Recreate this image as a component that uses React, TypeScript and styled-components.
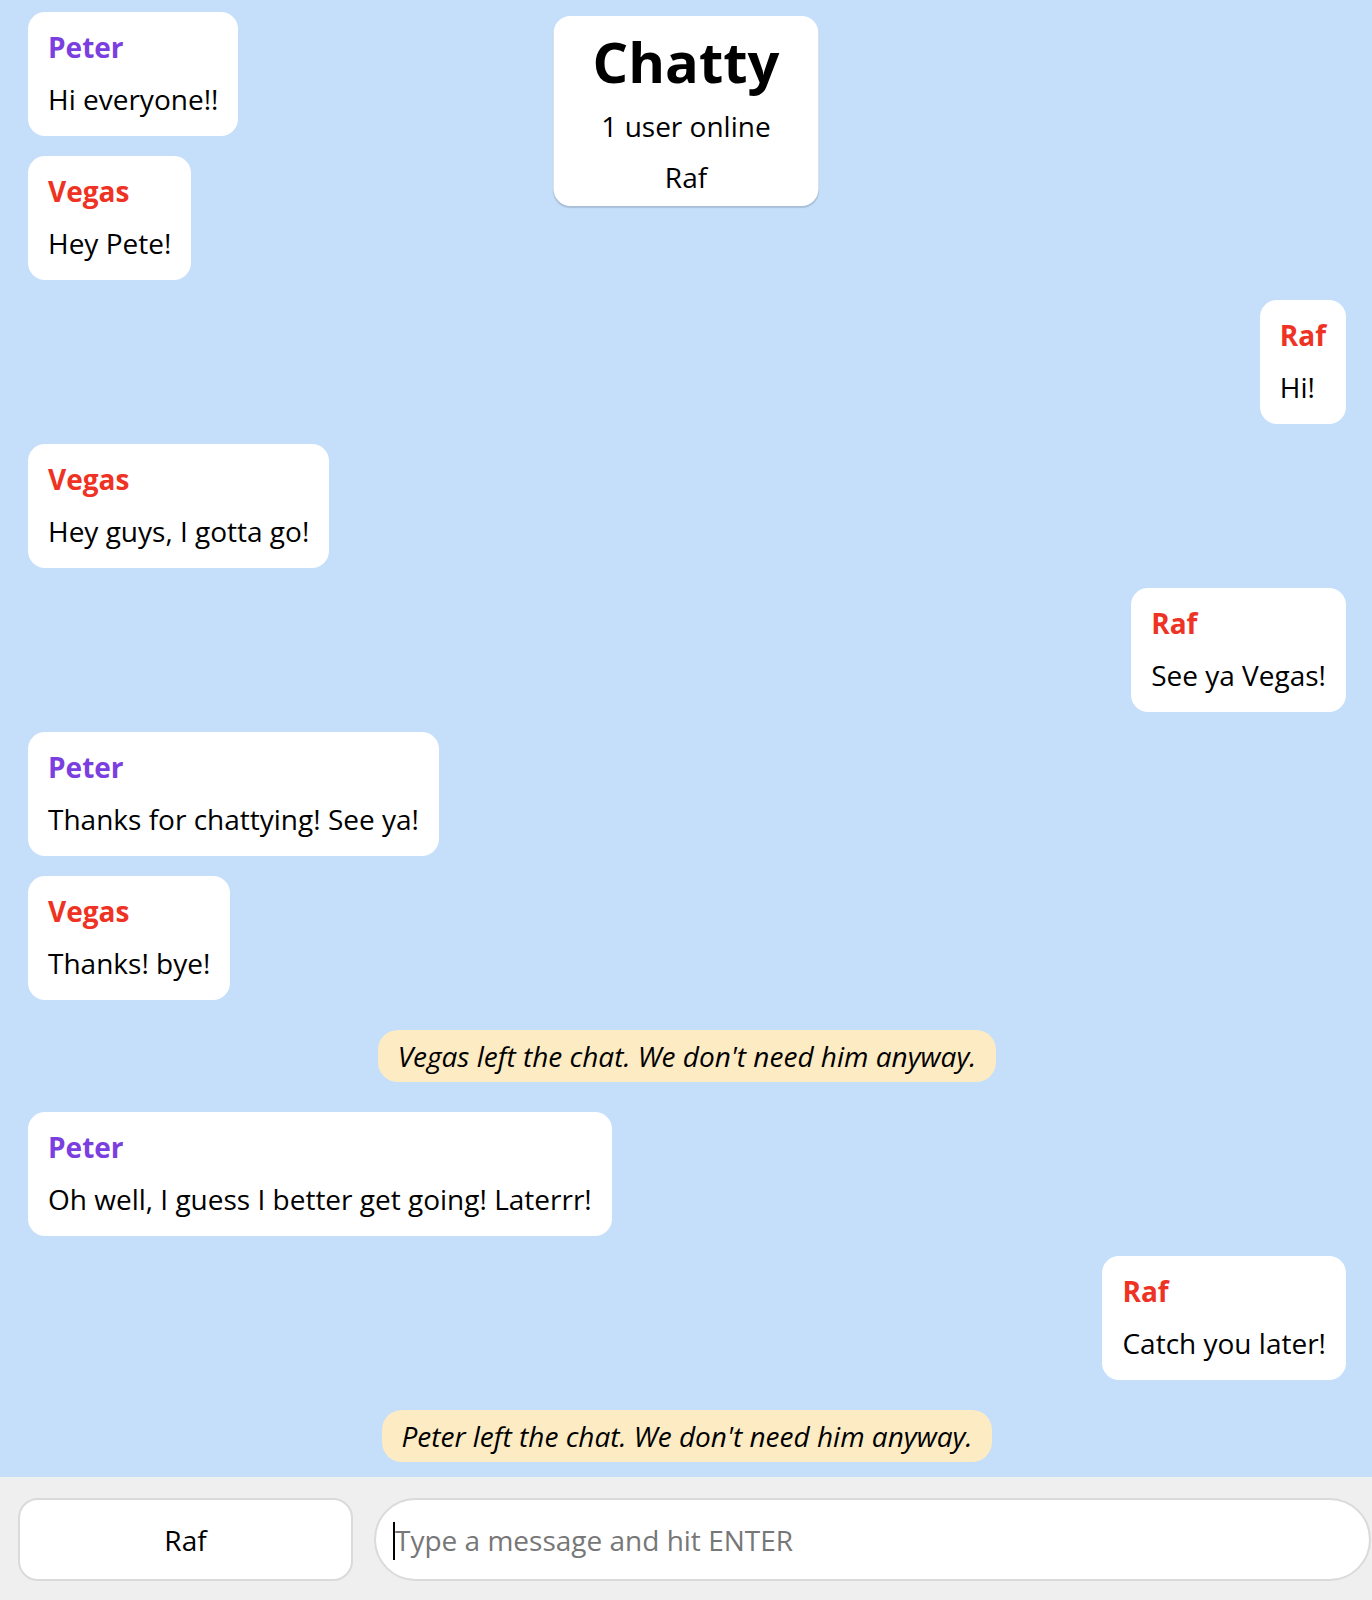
import React from "react";
import styled, { createGlobalStyle } from "styled-components";

const GlobalStyle = createGlobalStyle`
  html, body { margin: 0; padding: 0; }
  body {
    font-family: "Open Sans", "Noto Sans", sans-serif;
    background: #c5dffb;
  }
  * { box-sizing: border-box; }
`;

const Page = styled.div`
  position: relative;
  height: 1600px;
  display: flex;
  flex-direction: column;
  overflow: hidden;
`;

const Header = styled.header`
  position: absolute;
  top: 16px;
  left: 50%;
  transform: translateX(-50%);
  width: 265px;
  padding: 12px 0 3px;
  background: #fff;
  border-radius: 17px;
  box-shadow: 0 2px 1px rgba(0, 0, 0, 0.14);
  text-align: center;
  display: flex;
  flex-direction: column;
  align-items: center;
  z-index: 2;
`;

const Title = styled.h1`
  margin: 0 0 7px;
  font-size: 56px;
  line-height: 66px;
  font-weight: 700;
  color: #000;
`;

const HeaderLine = styled.div`
  font-size: 28px;
  line-height: 51px;
  color: #000;
`;

const MessageList = styled.main`
  flex: 1;
  display: flex;
  flex-direction: column;
  gap: 20px;
  padding: 12px 26px 0 28px;
`;

const Bubble = styled.div<{ $own: boolean }>`
  align-self: ${(p) => (p.$own ? "flex-end" : "flex-start")};
  background: #fff;
  border-radius: 17px;
  padding: 15px 20px 17px;
  display: flex;
  flex-direction: column;
  gap: 12px;
`;

const Username = styled.div<{ $color: string }>`
  font-size: 28px;
  line-height: 40px;
  font-weight: 700;
  color: ${(p) => p.$color};
`;

const Content = styled.div`
  font-size: 28px;
  line-height: 40px;
  color: #000;
`;

const Notice = styled.div`
  align-self: center;
  margin: 10px 0;
  background: #fdebc3;
  border-radius: 20px;
  padding: 6px 20px;
  font-size: 28px;
  line-height: 40px;
  font-style: italic;
  color: #000;
`;

const Footer = styled.footer`
  height: 123px;
  background: #efefef;
  display: flex;
  align-items: flex-start;
  gap: 21px;
  padding: 21px 1px 0 18px;
`;

const NameField = styled.div`
  width: 335px;
  height: 83px;
  background: #fff;
  border: 2px solid #dadada;
  border-radius: 20px;
  display: flex;
  align-items: center;
  justify-content: center;
  font-size: 28px;
  color: #000;
`;

const MessageField = styled.div`
  position: relative;
  flex: 1;
  height: 83px;
  background: #fff;
  border: 2px solid #dadada;
  border-radius: 42px;
  display: flex;
  align-items: center;
  padding-left: 19px;
  font-size: 28px;
  color: #777;
`;

const Caret = styled.span`
  position: absolute;
  left: 17px;
  top: 22px;
  width: 2px;
  height: 38px;
  background: #000;
`;

type Msg =
  | { kind: "msg"; user: string; text: string }
  | { kind: "notice"; text: string };

const COLORS: Record<string, string> = {
  Peter: "#7b3fe0",
  Vegas: "#ee3324",
  Raf: "#ee3324",
};

const messages: Msg[] = [
  { kind: "msg", user: "Peter", text: "Hi everyone!!" },
  { kind: "msg", user: "Vegas", text: "Hey Pete!" },
  { kind: "msg", user: "Raf", text: "Hi!" },
  { kind: "msg", user: "Vegas", text: "Hey guys, I gotta go!" },
  { kind: "msg", user: "Raf", text: "See ya Vegas!" },
  { kind: "msg", user: "Peter", text: "Thanks for chattying! See ya!" },
  { kind: "msg", user: "Vegas", text: "Thanks! bye!" },
  { kind: "notice", text: "Vegas left the chat. We don't need him anyway." },
  { kind: "msg", user: "Peter", text: "Oh well, I guess I better get going! Laterrr!" },
  { kind: "msg", user: "Raf", text: "Catch you later!" },
  { kind: "notice", text: "Peter left the chat. We don't need him anyway." },
];

export default function App() {
  return (
    <>
      <GlobalStyle />
      <Page>
        <Header>
          <Title>Chatty</Title>
          <HeaderLine>1 user online</HeaderLine>
          <HeaderLine>Raf</HeaderLine>
        </Header>
        <MessageList>
          {messages.map((m, i) =>
            m.kind === "notice" ? (
              <Notice key={i}>{m.text}</Notice>
            ) : (
              <Bubble key={i} $own={m.user === "Raf"}>
                <Username $color={COLORS[m.user]}>{m.user}</Username>
                <Content>{m.text}</Content>
              </Bubble>
            )
          )}
        </MessageList>
        <Footer>
          <NameField>Raf</NameField>
          <MessageField>
            <Caret />
            Type a message and hit ENTER
          </MessageField>
        </Footer>
      </Page>
    </>
  );
}
